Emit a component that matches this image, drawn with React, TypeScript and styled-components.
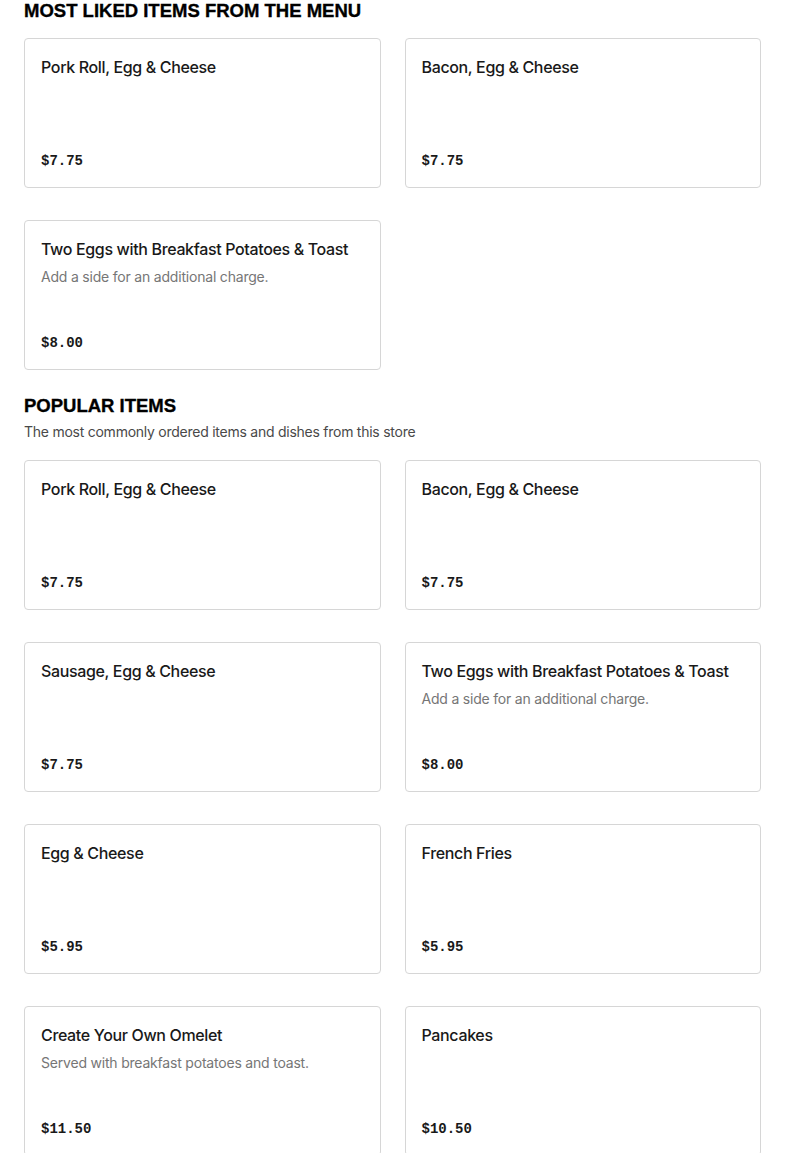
import React from "react";
import styled, { createGlobalStyle } from "styled-components";

const GlobalStyle = createGlobalStyle`
  html, body { margin: 0; padding: 0; background: #ffffff; }
  body { font-family: Inter, "Liberation Sans", sans-serif; color: #191919; }
  * { box-sizing: border-box; }
`;

const Page = styled.div`
  padding: 0 24px;
  display: flex;
  flex-direction: column;
`;

const Section = styled.section<{ $first?: boolean }>`
  display: flex;
  flex-direction: column;
  margin-top: ${(p) => (p.$first ? "0" : "25px")};
`;

const Heading = styled.h2<{ $hasSub?: boolean }>`
  margin: 0 0 ${(p) => (p.$hasSub ? "5px" : "16px")};
  font-family: "Liberation Sans", Arial, sans-serif;
  font-weight: 900;
  font-size: 18.5px;
  line-height: 22px;
  color: #000;
  -webkit-text-stroke: 0.35px #000;
`;

const Sub = styled.p`
  margin: 0 0 18px;
  font-size: 14px;
  line-height: 20px;
  letter-spacing: -0.25px;
  color: #494949;
`;

const Grid = styled.div`
  display: grid;
  grid-template-columns: 1fr 1fr;
  column-gap: 24px;
  row-gap: 32px;
`;

const Card = styled.div`
  height: 150px;
  border: 1px solid #d6d6d6;
  border-radius: 4px;
  padding: 16px 16px 15px;
  display: flex;
  flex-direction: column;
  justify-content: space-between;
  background: #fff;
`;

const Top = styled.div`
  display: flex;
  flex-direction: column;
  gap: 6px;
`;

const Title = styled.div`
  font-size: 16px;
  font-weight: 500;
  line-height: 24px;
  letter-spacing: -0.35px;
  color: #191919;
`;

const Desc = styled.div`
  font-size: 14px;
  line-height: 20px;
  letter-spacing: -0.2px;
  color: #767676;
`;

const Price = styled.div`
  font-family: "Liberation Mono", "Courier New", monospace;
  font-weight: 700;
  font-size: 14px;
  line-height: 22px;
  color: #191919;
`;

type Item = { name: string; desc?: string; price: string };

const liked: Item[] = [
  { name: "Pork Roll, Egg & Cheese", price: "$7.75" },
  { name: "Bacon, Egg & Cheese", price: "$7.75" },
  { name: "Two Eggs with Breakfast Potatoes & Toast", desc: "Add a side for an additional charge.", price: "$8.00" },
];

const popular: Item[] = [
  { name: "Pork Roll, Egg & Cheese", price: "$7.75" },
  { name: "Bacon, Egg & Cheese", price: "$7.75" },
  { name: "Sausage, Egg & Cheese", price: "$7.75" },
  { name: "Two Eggs with Breakfast Potatoes & Toast", desc: "Add a side for an additional charge.", price: "$8.00" },
  { name: "Egg & Cheese", price: "$5.95" },
  { name: "French Fries", price: "$5.95" },
  { name: "Create Your Own Omelet", desc: "Served with breakfast potatoes and toast.", price: "$11.50" },
  { name: "Pancakes", price: "$10.50" },
];

const ItemCard = ({ item }: { item: Item }) => (
  <Card>
    <Top>
      <Title>{item.name}</Title>
      {item.desc && <Desc>{item.desc}</Desc>}
    </Top>
    <Price>{item.price}</Price>
  </Card>
);

export default function App() {
  return (
    <>
      <GlobalStyle />
      <Page>
        <Section $first>
          <Heading>MOST LIKED ITEMS FROM THE MENU</Heading>
          <Grid>
            {liked.map((it, i) => (
              <ItemCard key={i} item={it} />
            ))}
          </Grid>
        </Section>
        <Section>
          <Heading $hasSub>POPULAR ITEMS</Heading>
          <Sub>The most commonly ordered items and dishes from this store</Sub>
          <Grid>
            {popular.map((it, i) => (
              <ItemCard key={i} item={it} />
            ))}
          </Grid>
        </Section>
      </Page>
    </>
  );
}
